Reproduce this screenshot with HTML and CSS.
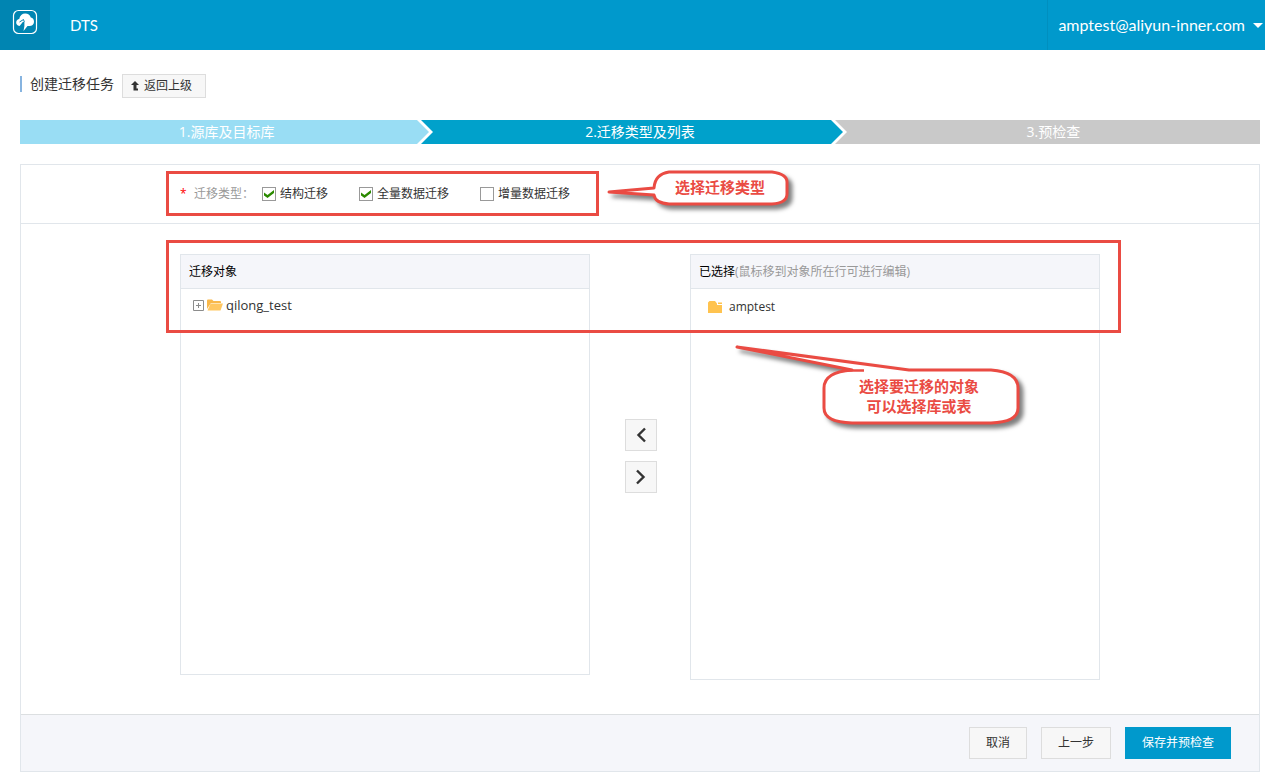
FILE: index.html
```html
<!DOCTYPE html>
<html lang="zh-CN">
<head>
<meta charset="utf-8">
<title>DTS - 创建迁移任务</title>
<link rel="stylesheet" href="styles.css">
</head>
<body>
<header class="topbar">
  <a class="logo" href="#" aria-label="首页">
    <svg width="26" height="26" viewBox="0 0 26 26" aria-hidden="true">
      <rect x="1.5" y="1.5" width="23" height="23" rx="5" fill="none" stroke="#fff" stroke-width="1.2"/>
      <path d="M7.500 17C5 16.500 4 15 4.200 13C4.500 11.200 5.700 10.300 7.200 10C7.800 6.500 10.200 4.500 13.200 4.500C16 4.500 18 6 18.800 8.500C21 9 22.200 10.800 22 13C21.800 15.500 20 17 17.500 17H15.500L11.500 22L12.400 17V13H10.800L8 16.500Z" fill="#fff"/>
      <path d="M7.500 13L11.500 10.500L12.300 13" fill="none" stroke="#0085b2" stroke-width="1"/>
    </svg>
  </a>
  <a class="product" href="#">DTS</a>
  <button class="account" type="button">amptest@aliyun-inner.com<span class="caret"></span></button>
</header>

<main class="page">
  <div class="title-row">
    <h1 class="title">创建迁移任务</h1>
    <button class="btn btn-back" type="button">
      <svg width="8" height="10" viewBox="0 0 8 10" aria-hidden="true"><path d="M4 0L8 4H5.500V7.500H7V9.500H2.500V4H0Z" fill="#333"/></svg>
      返回上级
    </button>
  </div>

  <ol class="steps">
    <li class="step step-done">1.源库及目标库
      <svg class="step-arrow" width="16" height="24" viewBox="0 0 16 24" aria-hidden="true"><path d="M0 0H16V24H0Z" fill="#00a1cb"/><path d="M0 0H4L16 12L4 24H0Z" fill="#fff"/><path d="M0 0L12 12L0 24Z" fill="#99ddf4"/></svg>
    </li>
    <li class="step step-current">2.迁移类型及列表
      <svg class="step-arrow" width="16" height="24" viewBox="0 0 16 24" aria-hidden="true"><path d="M0 0H16V24H0Z" fill="#c9c9c9"/><path d="M0 0H4L16 12L4 24H0Z" fill="#fff"/><path d="M0 0L12 12L0 24Z" fill="#00a1cb"/></svg>
    </li>
    <li class="step step-next">3.预检查</li>
  </ol>

  <form class="card">
    <section class="types">
      <div class="inner type-row">
        <span class="required">*</span>
        <span class="type-label">迁移类型：</span>
        <label class="check"><input type="checkbox" checked>结构迁移</label>
        <label class="check"><input type="checkbox" checked>全量数据迁移</label>
        <label class="check"><input type="checkbox">增量数据迁移</label>
        <div class="mark mark-types"></div>
        <div class="callout callout-types">
          <svg class="bubble" width="200" height="48" viewBox="0 0 200 48" aria-hidden="true">
            <path d="M2 26L47 22Q48 8 62 6H165Q180 8 180 16V28Q180 37 165 38H62Q48 37 47 29Z" fill="#fff" stroke="#ea4b43" stroke-width="3" stroke-linejoin="round"/>
          </svg>
          <p class="callout-text">选择迁移类型</p>
        </div>
      </div>
    </section>

    <section class="objects">
      <div class="inner transfer">
        <div class="panel">
          <h2 class="panel-head">迁移对象</h2>
          <div class="tree tree-source">
            <button class="expand" type="button" aria-label="展开">
              <svg width="11" height="11" viewBox="0 0 11 11" aria-hidden="true"><path d="M.5.5H10.500V10.500H.5ZM3 5.500H8M5.500 3V8" fill="none" stroke="#8c8c8c"/></svg>
            </button>
            <svg width="16" height="12" viewBox="0 0 16 12" aria-hidden="true"><path d="M0 10V1.500Q0 .5 1 .5H5L6.500 2H13Q14 2 14 3V4H4Z" fill="#f9b84a"/><path d="M3.500 4.500H16L13.500 11.500H.5Z" fill="#ffc761"/></svg>
            <span>qilong_test</span>
          </div>
        </div>
        <div class="moves">
          <button class="btn btn-move" type="button" aria-label="移回"><svg width="10" height="16" viewBox="0 0 10 16" aria-hidden="true"><path d="M9 1.500L2.500 8L9 14.500" fill="none" stroke="#333" stroke-width="2.400"/></svg></button>
          <button class="btn btn-move" type="button" aria-label="移入"><svg width="10" height="16" viewBox="0 0 10 16" aria-hidden="true"><path d="M1 1.500L7.500 8L1 14.500" fill="none" stroke="#333" stroke-width="2.400"/></svg></button>
        </div>
        <div class="panel panel-selected">
          <h2 class="panel-head">已选择<span class="hint">(鼠标移到对象所在行可进行编辑)</span></h2>
          <div class="tree tree-selected">
            <svg width="14" height="12" viewBox="0 0 14 12" aria-hidden="true"><path d="M0 12V1.500L1.500 0H7L9 2.500V4H14V12Z" fill="#ffc34f"/><path d="M10 1.500H14V3H10Z" fill="#ffc34f"/></svg>
            <span>amptest</span>
          </div>
        </div>
        <div class="mark mark-objects"></div>
        <div class="callout callout-objects">
          <svg class="bubble" width="300" height="96" viewBox="0 0 300 96" aria-hidden="true">
            <path d="M2 5L174 28H256Q283 30 283 46V66Q283 80 256 81H117Q89 80 89 66V46Q89 30 117 28Z" fill="#fff" stroke="#ea4b43" stroke-width="3" stroke-linejoin="round"/>
            <path d="M110 28.500H129" stroke="#ea4b43" stroke-width="2.500"/>
          </svg>
          <p class="callout-text">选择要迁移的对象<br>可以选择库或表</p>
        </div>
      </div>
    </section>

    <footer class="actions">
      <button class="btn" type="button">取消</button>
      <button class="btn" type="button">上一步</button>
      <button class="btn btn-primary" type="submit">保存并预检查</button>
    </footer>
  </form>
</main>
</body>
</html>
```
FILE: styles.css
```css
* {
  box-sizing: border-box;
}

body {
  margin: 0;
  background: #fff;
  color: #333;
  font: 12px/18px "Open Sans", "Noto Sans CJK SC", sans-serif;
}

button,
input {
  margin: 0;
  font: inherit;
  color: inherit;
}

h1,
h2,
p {
  margin: 0;
  font-weight: normal;
}

svg {
  display: block;
  flex: none;
}

/* Top bar */
.topbar {
  display: flex;
  height: 50px;
  background: #0099cc;
  color: #fff;
  font-family: Lato, "Open Sans", sans-serif;
}

.logo {
  display: flex;
  justify-content: center;
  width: 50px;
  padding-top: 9px;
  background: #0085b2;
}

.product {
  padding: 0 20px;
  color: #fff;
  font-size: 15px;
  line-height: 50px;
  text-decoration: none;
}

.account {
  display: flex;
  align-items: center;
  gap: 8px;
  margin-left: auto;
  padding: 0 2px 0 10px;
  border: 0;
  border-left: 1px solid #008fbf;
  background: none;
  font-size: 16px;
}

.caret {
  border: 5px solid transparent;
  border-top-color: #fff;
  border-bottom: 0;
}

/* Page */
.page {
  padding: 24px 5px 7px 20px;
}

.title-row {
  display: flex;
  align-items: flex-start;
  gap: 8px;
  margin-bottom: 22px;
}

.title {
  margin-top: 2px;
  padding-left: 8px;
  border-left: 2px solid #87b4e0;
  font-size: 14px;
  line-height: 16px;
}

.btn {
  height: 32px;
  padding: 0 16px;
  border: 1px solid #ddd;
  background: #f7f7f7;
  color: #333;
}

.btn-back {
  display: flex;
  align-items: center;
  gap: 5px;
  height: 24px;
  padding: 0 13px 0 8px;
}

.btn-move {
  display: flex;
  align-items: center;
  justify-content: center;
  width: 32px;
  padding: 0;
}

.btn-primary {
  border-color: #0099cc;
  background: #0099cc;
  color: #fff;
}

/* Steps */
.steps {
  display: flex;
  margin: 0 0 20px;
  padding: 0;
  list-style: none;
}

.step {
  position: relative;
  flex: 1;
  color: #fff;
  font-size: 14px;
  line-height: 24px;
  text-align: center;
}

.step-done {
  background: #99ddf4;
}

.step-current {
  background: #00a1cb;
}

.step-next {
  background: #c9c9c9;
}

.step-arrow {
  position: absolute;
  top: 0;
  right: 0;
}

/* Card */
.card {
  border: 1px solid #e1e6eb;
}

.inner {
  position: relative;
  width: 920px;
  max-width: 100%;
  margin: 0 auto;
}

.types {
  border-bottom: 1px solid #e1e6eb;
}

.type-row {
  display: flex;
  align-items: center;
  height: 58px;
}

.required {
  width: 14px;
  color: #f00;
}

.type-label {
  width: 68px;
  color: #999;
  white-space: nowrap;
}

.check {
  display: flex;
  align-items: center;
  gap: 4px;
  margin-right: 31px;
}

.check input {
  appearance: none;
  display: flex;
  align-items: center;
  justify-content: center;
  width: 14px;
  height: 14px;
  border: 1px solid #999;
  background: #fff;
}

.check input:checked::after {
  content: "";
  width: 10px;
  height: 8px;
  background: #2b8a00;
  clip-path: polygon(0 30%, 35% 62%, 100% 0, 100% 38%, 35% 100%, 0 70%);
}

/* Transfer */
.objects {
  padding: 30px 0 34px;
}

.transfer {
  display: flex;
  align-items: flex-start;
}

.panel {
  flex: 1;
  min-height: 421px;
  border: 1px solid #e1e6eb;
}

.panel-selected {
  min-height: 426px;
}

.panel-head {
  padding: 8px 8px 7px;
  border-bottom: 1px solid #e1e6eb;
  background: #f5f6fa;
  color: #000;
  font-size: 12px;
  line-height: 18px;
}

.hint {
  color: #999;
}

.tree {
  display: flex;
  align-items: center;
}

.tree-source {
  gap: 3px;
  padding: 7px 12px;
  font-size: 13px;
}

.tree-selected {
  gap: 7px;
  padding: 9px 17px;
}

.expand {
  padding: 0;
  border: 0;
  background: none;
}

.moves {
  display: flex;
  flex-direction: column;
  align-self: center;
  align-items: center;
  gap: 10px;
  width: 100px;
  padding: 0 0 22px 2px;
}

/* Footer */
.actions {
  display: flex;
  justify-content: flex-end;
  gap: 14px;
  padding: 12px 28px;
  border-top: 1px solid #dcdfe1;
  background: #f5f6fa;
}

/* Annotations over the form */
.mark {
  position: absolute;
  border: 3px solid #ea4b43;
  pointer-events: none;
}

.mark-types {
  top: 6px;
  left: -14px;
  width: 433px;
  height: 45px;
}

.mark-objects {
  top: -14px;
  left: -14px;
  right: -21px;
  height: 93px;
}

.callout {
  position: absolute;
  display: grid;
  color: #ea4b43;
}

.callout > * {
  grid-area: 1 / 1;
}

.callout-types {
  top: 1px;
  left: 427px;
}

.callout-objects {
  top: 88px;
  left: 555px;
}

.bubble {
  filter: drop-shadow(4px 4px 2px rgba(0, 0, 0, 0.5));
}

.callout-text {
  z-index: 1;
  font-size: 15px;
  font-weight: bold;
  line-height: 20px;
  text-align: center;
}

.callout-types .callout-text {
  padding: 11px 24px 0 50px;
}

.callout-objects .callout-text {
  padding: 34px 16px 0 84px;
}
```
